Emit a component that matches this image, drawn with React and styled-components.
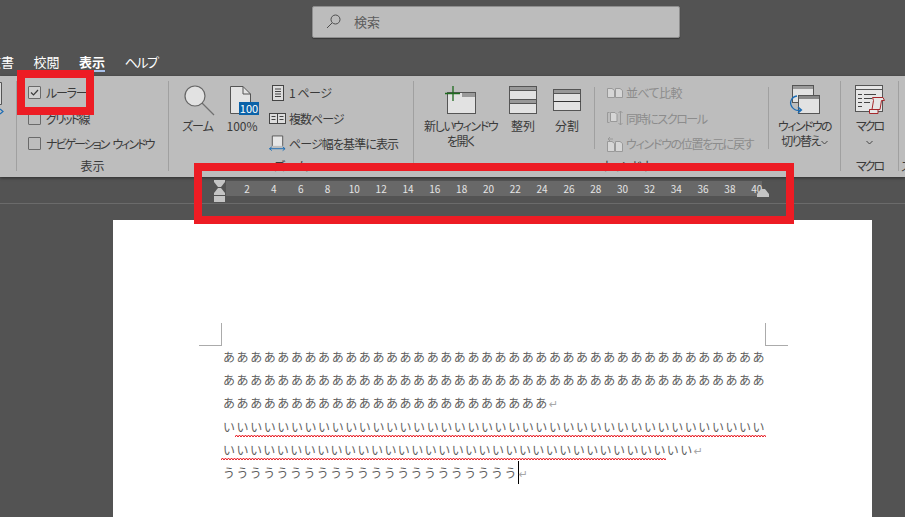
import React from 'react';
import styled, { createGlobalStyle } from 'styled-components';

const GlobalStyle = createGlobalStyle`
  html, body { margin: 0; padding: 0; background: #535353; }
  * { box-sizing: border-box; }
`;

const UI_FONT = `"Noto Sans CJK JP", "Noto Sans", sans-serif`;
const RULER_TICKS = Array.from({ length: 20 }, (_, i) => (i + 1) * 2);

export default function App() {
    return (
        <Screen>
            <GlobalStyle/>
            <TitleArea>
                <SearchBox>
                    <SearchIcon/>
                    <span>検索</span>
                </SearchBox>
                <Tabs>
                    <Tab>文書</Tab>
                    <Tab>校閲</Tab>
                    <Tab $active>表示</Tab>
                    <Tab $track={-1.4}>ヘルプ</Tab>
                </Tabs>
            </TitleArea>

            <Ribbon>
                <Group $width={16}>
                    <GroupBody><ClippedViewIcon/></GroupBody>
                </Group>
                <GroupSep/>
                <Group $width={151}>
                    <GroupBody $pad={11}>
                        <Rows>
                            <CheckRow $track={-1.2}><CheckBox $checked><CheckMark/></CheckBox>ルーラー</CheckRow>
                            <CheckRow $track={-1.8}><CheckBox/>グリッド線</CheckRow>
                            <CheckRow $track={-2}><CheckBox/>ナビゲーション{'\u2002'}ウィンドウ</CheckRow>
                        </Rows>
                    </GroupBody>
                    <GroupLabel>表示</GroupLabel>
                </Group>
                <GroupSep/>
                <Group $width={244}>
                    <GroupBody $pad={10}>
                        <BigButton $width={37} $track={-1}>
                            <IconSlot><ZoomIcon/></IconSlot>
                            ズーム
                        </BigButton>
                        <BigButton $width={42} $left={5}>
                            <IconSlot>
                                <PageIcon/>
                                <PercentBadge>100</PercentBadge>
                            </IconSlot>
                            100%
                        </BigButton>
                        <Rows $left={6}>
                            <SmallRow $track={-0.5}><SmallIcon><OnePageIcon/></SmallIcon>1 ページ</SmallRow>
                            <SmallRow $track={-1}><SmallIcon><MultiPageIcon/></SmallIcon>複数ページ</SmallRow>
                            <SmallRow $track={-0.9}><SmallIcon><PageWidthIcon/></SmallIcon>ページ幅を基準に表示</SmallRow>
                        </Rows>
                    </GroupBody>
                    <GroupLabel>ズーム</GroupLabel>
                </Group>
                <GroupSep/>
                <Group $width={426}>
                    <GroupBody $pad={10}>
                        <BigButton $width={73} $track={-1.4}>
                            <IconSlot><NewWindowIcon/></IconSlot>
                            新しいウィンドウ<br/>を開く
                        </BigButton>
                        <BigButton $width={40} $left={6}>
                            <IconSlot><ArrangeIcon/></IconSlot>
                            整列
                        </BigButton>
                        <BigButton $width={40} $left={4}>
                            <IconSlot><SplitIcon/></IconSlot>
                            分割
                        </BigButton>
                        <InnerSep $left={7}/>
                        <Rows $left={11} $width={151}>
                            <SmallRow $disabled $track={-0.6}><SmallIcon><SideBySideIcon/></SmallIcon>並べて比較</SmallRow>
                            <SmallRow $disabled $track={-1.4}><SmallIcon><SyncScrollIcon/></SmallIcon>同時にスクロール</SmallRow>
                            <SmallRow $disabled $track={-1.3}><SmallIcon><ResetPosIcon/></SmallIcon>ウィンドウの位置を元に戻す</SmallRow>
                        </Rows>
                        <InnerSep $left={11}/>
                        <BigButton $width={71} $track={-1.6}>
                            <IconSlot><SwitchWindowIcon/></IconSlot>
                            ウィンドウの<br/>切り替え <Chevron/>
                        </BigButton>
                    </GroupBody>
                    <GroupLabel>ウィンドウ</GroupLabel>
                </Group>
                <GroupSep/>
                <Group $width={57}>
                    <GroupBody>
                        <BigButton $width={57} $track={-2}>
                            <IconSlot><MacroIcon/></IconSlot>
                            マクロ<br/>
                            <Chevron/>
                        </BigButton>
                    </GroupBody>
                    <GroupLabel $track={-2}>マクロ</GroupLabel>
                </Group>
                <GroupSep/>
                <Group $width={6}>
                    <GroupBody/>
                    <GroupLabel $left>ズ</GroupLabel>
                </Group>
            </Ribbon>

            <RulerRow>
                <RulerBand>
                    <IndentMarkers/>
                    {RULER_TICKS.map(tick => <RulerTick key={tick}>{tick}</RulerTick>)}
                    <RightIndent/>
                </RulerBand>
            </RulerRow>

            <DocArea>
                <Page>
                    <CropMarks>
                        <CropMark/>
                        <CropMark $right/>
                    </CropMarks>
                    <TextBlock>
                        <Line $track={1.58}>{'あ'.repeat(40)}</Line>
                        <Line $track={1.58}>{'あ'.repeat(40)}</Line>
                        <Line $track={1.58}>{'あ'.repeat(24)}<ReturnMark>↵</ReturnMark></Line>
                        <Line $track={1.58}>{'い'.repeat(40)}<Squiggle left={12} width={531}/></Line>
                        <Line $track={1.45}>{'い'.repeat(35)}<ReturnMark>↵</ReturnMark><Squiggle left={-2} width={445}/></Line>
                        <Line $track={1.4}>{'う'.repeat(22)}<Caret/><ReturnMark>↵</ReturnMark></Line>
                    </TextBlock>
                </Page>
            </DocArea>

            <CalloutCheck/>
            <CalloutRuler/>
        </Screen>
    );
}

/* icons */

function SearchIcon() {
    return (
        <svg width="15" height="15" viewBox="0 0 15 15" fill="none" stroke="#4d4d4d">
            <circle cx="9.5" cy="5.5" r="4.5"/>
            <path d="M6 9 L1 14"/>
        </svg>
    );
}

function CheckMark() {
    return (
        <svg width="11" height="11" viewBox="0 0 11 11" fill="none" stroke="#3c3c3c" strokeWidth="1.2">
            <path d="M2 5.5 L4.5 8 L9 3"/>
        </svg>
    );
}

function Chevron() {
    return (
        <ChevronSvg width="7" height="5" viewBox="0 0 7 5" fill="none" stroke="#444">
            <path d="M0.5 1 L3.5 4 L6.5 1"/>
        </ChevronSvg>
    );
}

function ClippedViewIcon() {
    return (
        <svg width="16" height="60" viewBox="0 0 16 60" fill="none">
            <path d="M-3 6.5 H1.5 V28.5 H-3" stroke="#555" fill="#ddd"/>
            <path d="M0 33 L3 35.5 L0 38" stroke="#1b6cb5" strokeWidth="1.2"/>
        </svg>
    );
}

function ZoomIcon() {
    return (
        <svg width="36" height="32" viewBox="-4 0 36 32">
            <path d="M17 18 L30 31" stroke="#707070" strokeWidth="1.3"/>
            <circle cx="11" cy="12" r="10" fill="#e2e2e2" stroke="#666" strokeWidth="1.2"/>
        </svg>
    );
}

function PageIcon() {
    return (
        <svg width="26" height="30" viewBox="0 0 26 30">
            <path d="M1.5 1.5 H14 L21.5 9 V28.5 H1.5 Z" fill="#e4e4e4" stroke="#555"/>
            <path d="M14 1.5 V9 H21.5" fill="none" stroke="#555"/>
        </svg>
    );
}

function OnePageIcon() {
    return (
        <svg width="14" height="16" viewBox="0 0 14 16" fill="none" stroke="#444">
            <rect x="1.5" y="0.5" width="11" height="15" fill="#ddd"/>
            <path d="M4 4 H10 M4 6.5 H10 M4 9 H10 M4 11.5 H10"/>
        </svg>
    );
}

function MultiPageIcon() {
    return (
        <svg width="17" height="11" viewBox="0 0 17 11" fill="none" stroke="#444">
            <rect x="0.5" y="0.5" width="16" height="10" fill="#ddd"/>
            <path d="M8.5 0.5 V10.5 M2.5 3.5 H6.5 M2.5 6.5 H6.5 M10.5 3.5 H14.5 M10.5 6.5 H14.5"/>
        </svg>
    );
}

function PageWidthIcon() {
    return (
        <svg width="18" height="17" viewBox="0 0 18 17" fill="none">
            <path d="M3.5 11 V0.5 H14.5 V11" fill="#e6e6e6" stroke="#555"/>
            <path d="M0.5 14 H17 M3 12 L0.5 14 L3 16 M14.5 12 L17 14 L14.5 16" stroke="#1b6cb5"/>
        </svg>
    );
}

function NewWindowIcon() {
    return (
        <svg width="32" height="30" viewBox="0 0 32 30">
            <rect x="2.5" y="7.5" width="28" height="21" fill="#e2e2e2" stroke="#555"/>
            <rect x="17" y="8" width="13" height="4" fill="#999"/>
            <path d="M0 8.5 H15 M8 1 V16" stroke="#1e6b1e" strokeWidth="1.3" fill="none"/>
        </svg>
    );
}

function ArrangeIcon() {
    return (
        <svg width="28" height="28" viewBox="0 0 28 28" stroke="#555">
            <rect x="0.5" y="0.5" width="27" height="13" fill="#e2e2e2"/>
            <rect x="0.5" y="0.5" width="27" height="4" fill="#999"/>
            <rect x="0.5" y="13.5" width="27" height="14" fill="#e2e2e2"/>
            <rect x="0.5" y="13.5" width="27" height="4" fill="#999"/>
        </svg>
    );
}

function SplitIcon() {
    return (
        <svg width="28" height="22" viewBox="0 0 28 22" stroke="#555">
            <rect x="0.5" y="0.5" width="27" height="21" fill="#e2e2e2"/>
            <rect x="0.5" y="0.5" width="27" height="4" fill="#999"/>
            <path d="M0.5 12.5 H27.5" stroke="#333"/>
        </svg>
    );
}

function SideBySideIcon() {
    return (
        <svg width="16" height="12" viewBox="0 0 16 12" fill="#d6d6d6" stroke="#999">
            <path d="M0.5 1.5 H5 L7.5 3.5 V10.5 H0.5 Z"/>
            <path d="M8.5 1.5 H13 L15.5 3.5 V10.5 H8.5 Z"/>
        </svg>
    );
}

function SyncScrollIcon() {
    return (
        <svg width="16" height="16" viewBox="0 0 16 16" fill="none" stroke="#999">
            <path d="M0.5 2.5 V12.5 H2.5 M0.5 2.5 H2.5"/>
            <path d="M3.5 2.5 H8 L10 4.5 V11.5 H3.5 Z" fill="#d6d6d6"/>
            <path d="M13.5 1 V15 M11.5 3 L13.5 1 L15.5 3 M11.5 13 L13.5 15 L15.5 13"/>
        </svg>
    );
}

function ResetPosIcon() {
    return (
        <svg width="16" height="16" viewBox="0 0 16 16" fill="none" stroke="#999">
            <path d="M0.5 5.5 H5 L7.5 7.5 V15.5 H0.5 Z" fill="#d6d6d6"/>
            <path d="M8.5 5.5 H13 L15.5 7.5 V15.5 H8.5 Z" fill="#d6d6d6"/>
            <path d="M1 3 H6 M3 1 L1 3 L3 5"/>
        </svg>
    );
}

function SwitchWindowIcon() {
    return (
        <svg width="32" height="30" viewBox="0 0 32 30">
            <rect x="3.5" y="0.5" width="21" height="17" fill="#e2e2e2" stroke="#555"/>
            <rect x="4" y="1" width="20" height="3" fill="#999"/>
            <rect x="9.5" y="10.5" width="21" height="18" fill="#e2e2e2" stroke="#555"/>
            <rect x="10" y="11" width="20" height="3" fill="#888"/>
            <path d="M8 11 C2 12 0 18 3 22 C5 25 8 26 12 25 M9 22 L12.5 25 L9 28" fill="none" stroke="#1b6cb5" strokeWidth="1.3"/>
        </svg>
    );
}

function MacroIcon() {
    return (
        <svg width="31" height="30" viewBox="0 0 31 30" fill="none">
            <rect x="1.5" y="0.5" width="27" height="26" fill="#e6e6e6" stroke="#555"/>
            <path d="M1.5 4.5 H28.5" stroke="#555"/>
            <path d="M4 9.5 H8 M10 9.5 H22 M4 13.5 H8 M10 13.5 H18 M4 17.5 H8 M10 17.5 H16 M4 21.5 H8" stroke="#444"/>
            <path d="M18.5 12.5 H29 L30.5 15.5 H27.5 L26 24.5 H24 V28.5 H15.5 V24.5 H18 L19.5 15.5 Z M15.5 24.5 H24" fill="#e6e6e6" stroke="#a5282c"/>
        </svg>
    );
}

function IndentMarkers() {
    return (
        <IndentSvg width="14" height="24" viewBox="0 0 14 24" fill="#c4c4c4">
            <path d="M1 0 H12 V2 L8 7 H5 L1 2 Z"/>
            <path d="M5 8 H8 L12 13 V15 H1 V13 Z"/>
            <rect x="1" y="16" width="11" height="6"/>
        </IndentSvg>
    );
}

function RightIndent() {
    return (
        <RightIndentSvg width="12" height="8" viewBox="0 0 12 8" fill="#c4c4c4">
            <path d="M4 0 H8 L12 5 V8 H0 V5 Z"/>
        </RightIndentSvg>
    );
}

function Squiggle({ left, width }) {
    const segments = Array.from({ length: Math.ceil(width / 3) }, () => 'l1.5 -2 l1.5 2').join(' ');
    return (
        <SquiggleSvg $left={left} width={width} height="4" fill="none" stroke="#e8141c">
            <path d={`M0 3 ${segments}`}/>
        </SquiggleSvg>
    );
}

/* layout */

const Screen = styled.div`
  position: relative;
  width: 905px;
  height: 517px;
  overflow: hidden;
  background: #535353;
  font-family: ${UI_FONT};
`;

const TitleArea = styled.header`
  height: 76px;
  padding-top: 6px;
  background: #535353;
  font-feature-settings: "palt";
`;

const SearchBox = styled.div`
  display: flex;
  align-items: center;
  gap: 13px;
  width: 368px;
  height: 32px;
  margin-left: 312px;
  padding: 0 0 2px 13px;
  background: #bcbcbc;
  border: 1px solid #8e8e8e;
  border-radius: 2px;
  box-shadow: 0 1px 1px rgba(0, 0, 0, 0.35);
  font-size: 13px;
  color: #5c5c5c;
`;

const Tabs = styled.nav`
  display: flex;
  gap: 19.5px;
  margin: 14px 0 0 -12px;
`;

const Tab = styled.div`
  height: 20px;
  line-height: 19px;
  font-size: 13px;
  color: #fff;
  letter-spacing: ${p => p.$track || 0}px;
  font-weight: ${p => (p.$active ? 700 : 400)};
  border-bottom: 2px solid ${p => (p.$active ? '#a9c1ea' : 'transparent')};
`;

const Ribbon = styled.section`
  display: flex;
  height: 101px;
  background: #bdbdbd;
  box-shadow: 0 1px 3px rgba(0, 0, 0, 0.45);
  position: relative;
  color: #3a3a3a;
  font-size: 12px;
  font-feature-settings: "palt";
`;

const Group = styled.div`
  display: flex;
  flex-direction: column;
  flex: none;
  width: ${p => p.$width}px;
`;

const GroupBody = styled.div`
  display: flex;
  height: 82px;
  padding-left: ${p => p.$pad || 0}px;
`;

const GroupLabel = styled.div`
  height: 16px;
  line-height: 16px;
  font-size: 12px;
  white-space: nowrap;
  letter-spacing: ${p => p.$track || 0}px;
  text-align: ${p => (p.$left ? 'left' : 'center')};
  padding-left: ${p => (p.$left ? 2 : 0)}px;
`;

const GroupSep = styled.div`
  flex: none;
  width: 1px;
  margin: 5px 0 6px;
  background: #a0a0a0;
`;

const InnerSep = styled.div`
  flex: none;
  width: 1px;
  height: 62px;
  margin: 11px 0 0 ${p => p.$left}px;
  background: #a0a0a0;
`;

const Rows = styled.div`
  display: flex;
  flex-direction: column;
  padding-top: 4px;
  margin-left: ${p => p.$left || 0}px;
  width: ${p => (p.$width ? `${p.$width}px` : 'auto')};
  white-space: nowrap;
`;

const CheckRow = styled.div`
  display: flex;
  align-items: center;
  gap: 5px;
  height: 25.5px;
  letter-spacing: ${p => p.$track || 0}px;
`;

const CheckBox = styled.span`
  display: flex;
  align-items: center;
  justify-content: center;
  width: 13px;
  height: 13px;
  border: 1px solid #6a6a6a;
  border-radius: 1px;
  background: ${p => (p.$checked ? '#cfcfcf' : 'transparent')};
`;

const SmallRow = styled.div`
  display: flex;
  align-items: center;
  gap: 3px;
  height: 25.5px;
  letter-spacing: ${p => p.$track || 0}px;
  color: ${p => (p.$disabled ? '#8c8c8c' : '#3a3a3a')};
`;

const SmallIcon = styled.span`
  display: flex;
  align-items: center;
  justify-content: center;
  width: 17px;
  flex: none;
`;

const BigButton = styled.div`
  flex: none;
  width: ${p => p.$width}px;
  margin-left: ${p => p.$left || 0}px;
  padding-top: 6px;
  line-height: 15px;
  letter-spacing: ${p => p.$track || 0}px;
  text-align: center;
  white-space: nowrap;
`;

const IconSlot = styled.div`
  position: relative;
  display: flex;
  align-items: center;
  justify-content: center;
  height: 36px;
`;

const PercentBadge = styled.span`
  position: absolute;
  top: 20px;
  left: 18px;
  width: 20px;
  height: 13px;
  line-height: 13px;
  background: #0b62a8;
  color: #fff;
  font-size: 11px;
  text-align: center;
`;

const ChevronSvg = styled.svg`
  display: inline-block;
  vertical-align: middle;
`;

const RulerRow = styled.div`
  height: 27px;
  padding-top: 4px;
  background: #535353;
  border-bottom: 1px solid #6b6b6b;
`;

const RulerBand = styled.div`
  position: relative;
  display: flex;
  width: 536px;
  height: 15px;
  margin-left: 226px;
  padding-left: 7.6px;
  background: #686868;
`;

const RulerTick = styled.span`
  flex: none;
  width: 26.84px;
  line-height: 15px;
  text-align: center;
  font-size: 10px;
  color: #e4e4e4;
`;

const IndentSvg = styled.svg`
  position: absolute;
  left: -13px;
  top: -1px;
`;

const RightIndentSvg = styled.svg`
  position: absolute;
  left: 531px;
  top: 8px;
`;

const DocArea = styled.main`
  padding-top: 16px;
`;

const Page = styled.article`
  width: 759px;
  height: 300px;
  margin-left: 113px;
  padding: 103px 0 0 86px;
  background: #fff;
`;

const CropMarks = styled.div`
  display: flex;
  justify-content: space-between;
  width: 589px;
`;

const CropMark = styled.div`
  width: 23px;
  height: 23px;
  border-bottom: 1px solid #ababab;
  border-right: ${p => (p.$right ? 'none' : '1px solid #ababab')};
  border-left: ${p => (p.$right ? '1px solid #ababab' : 'none')};
`;

const TextBlock = styled.div`
  padding-left: 24px;
  margin-top: -1px;
`;

const Line = styled.div`
  position: relative;
  height: 23.2px;
  line-height: 23px;
  white-space: nowrap;
  font-size: 12px;
  letter-spacing: ${p => p.$track}px;
  color: #606060;
`;

const ReturnMark = styled.span`
  font-size: 11px;
  color: #a8a8a8;
  letter-spacing: 0;
  font-family: "DejaVu Sans", sans-serif;
`;

const Caret = styled.span`
  display: inline-block;
  width: 1px;
  height: 23px;
  background: #000;
  vertical-align: top;
`;

const SquiggleSvg = styled.svg`
  position: absolute;
  left: ${p => p.$left}px;
  top: 19px;
`;

const Callout = styled.div`
  position: absolute;
  border: 8px solid #ed1c24;
`;

const CalloutCheck = styled(Callout)`
  left: 17px;
  top: 70px;
  width: 77px;
  height: 45px;
`;

const CalloutRuler = styled(Callout)`
  left: 194px;
  top: 163px;
  width: 600px;
  height: 61px;
`;
